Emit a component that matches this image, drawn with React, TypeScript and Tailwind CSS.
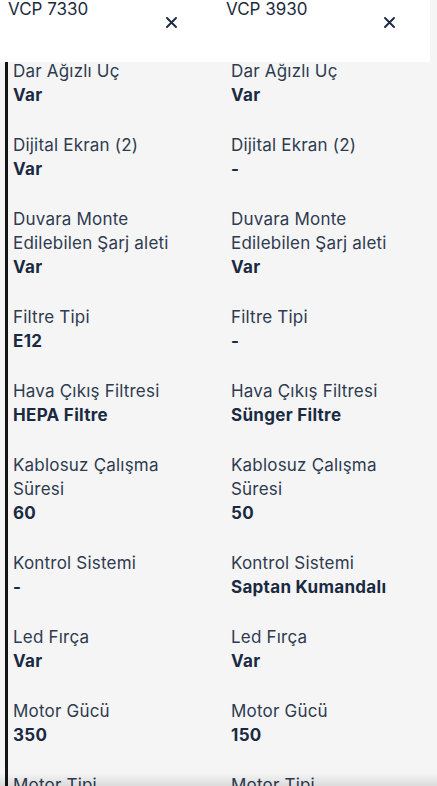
const rows: { label: string; a: string; b: string }[] = [
  { label: 'Dar Ağızlı Uç', a: 'Var', b: 'Var' },
  { label: 'Dijital Ekran (2)', a: 'Var', b: '-' },
  { label: 'Duvara Monte Edilebilen Şarj aleti', a: 'Var', b: 'Var' },
  { label: 'Filtre Tipi', a: 'E12', b: '-' },
  { label: 'Hava Çıkış Filtresi', a: 'HEPA Filtre', b: 'Sünger Filtre' },
  { label: 'Kablosuz Çalışma Süresi', a: '60', b: '50' },
  { label: 'Kontrol Sistemi', a: '-', b: 'Saptan Kumandalı' },
  { label: 'Led Fırça', a: 'Var', b: 'Var' },
  { label: 'Motor Gücü', a: '350', b: '150' },
  { label: 'Motor Tipi', a: 'Dijital', b: 'Dijital' },
];

const CloseIcon = () => (
  <svg width="11" height="11" viewBox="0 0 11 11" fill="none">
    <path d="M1 1L10 10M10 1L1 10" stroke="#1d2b40" strokeWidth="1.9" strokeLinecap="round" />
  </svg>
);

const Cell = ({ label, value }: { label: string; value: string }) => (
  <div className="max-w-[174px]">
    <div className="text-[17px] leading-6 tracking-[0.2px] text-[#2e3b50]">{label}</div>
    <div className="text-[17px] leading-6 tracking-[0.3px] font-bold text-[#1a2a42]">{value}</div>
  </div>
);

export default function App() {
  return (
    <div
      className="min-h-screen bg-[#f5f5f5] overflow-hidden"
      style={{ fontFamily: 'Inter, "Noto Sans", sans-serif' }}
    >
      <header className="sticky top-0 z-10 flex h-[62px] w-[430px] bg-white">
        <div className="flex w-[218px] pl-[8px]">
          <div className="flex-1 -mt-[3px] text-[17px] leading-6 text-[#1d2b40]">VCP 7330</div>
          <button className="mt-[17px] mr-[41px] h-[11px] w-[11px]">
            <CloseIcon />
          </button>
        </div>
        <div className="flex w-[212px] pl-[8px]">
          <div className="flex-1 -mt-[3px] text-[17px] leading-6 text-[#1d2b40]">VCP 3930</div>
          <button className="mt-[17px] mr-[35px] h-[11px] w-[11px]">
            <CloseIcon />
          </button>
        </div>
      </header>

      <div className="ml-[5px] -mt-[3px] border-l-[3px] border-[#141414] pl-[5px]">
        {rows.map((r) => (
          <div key={r.label} className="grid grid-cols-[218px_1fr] pb-[26px]">
            <Cell label={r.label} value={r.a} />
            <Cell label={r.label} value={r.b} />
          </div>
        ))}
      </div>

      <div className="fixed bottom-0 left-0 right-0 h-[13px] bg-linear-to-b from-transparent to-black/10" />
    </div>
  );
}
